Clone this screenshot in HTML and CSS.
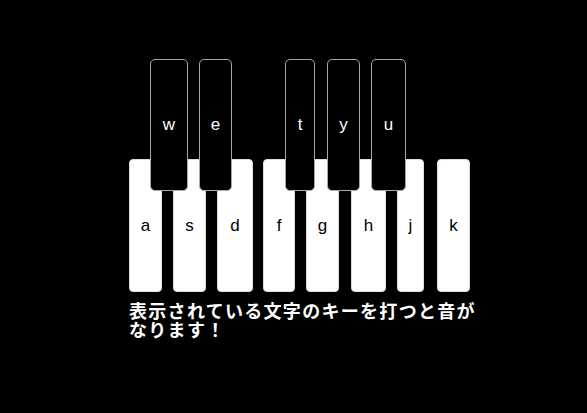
FILE: index.html
```html
<!DOCTYPE html>
<html lang="ja">
<head>
<meta charset="utf-8">
<link rel="stylesheet" href="styles.css">
</head>
<body>
<div class="piano">
  <div class="black-row">
    <div class="bkey k-w">w</div>
    <div class="bkey k-e">e</div>
    <div class="bkey k-t">t</div>
    <div class="bkey k-y">y</div>
    <div class="bkey k-u">u</div>
  </div>
  <div class="white-row">
    <div class="wkey k-a">a</div>
    <div class="wkey k-s">s</div>
    <div class="wkey k-d">d</div>
    <div class="wkey k-f">f</div>
    <div class="wkey k-g">g</div>
    <div class="wkey k-h">h</div>
    <div class="wkey k-j">j</div>
    <div class="wkey k-k">k</div>
  </div>
  <p class="message">表示されている文字のキーを打つと音がなります！</p>
</div>
</body>
</html>
```
FILE: styles.css
```css
html, body {
  margin: 0;
  background: #000;
}
body {
  width: 587px;
  height: 413px;
  overflow: hidden;
  font-family: "Liberation Sans", Arial, sans-serif;
}
.piano {
  padding: 59px 0 0 129px;
  width: 341px;
}
.black-row {
  position: relative;
  z-index: 2;
  display: flex;
  height: 132px;
}
.bkey {
  box-sizing: border-box;
  height: 132px;
  background: #000;
  border: 1px solid #a8a8a8;
  border-radius: 5px;
  color: #fff;
  font-size: 17px;
  display: flex;
  align-items: center;
  justify-content: center;
}
.k-w { width: 38px; margin-left: 21px; }
.k-e { width: 33px; margin-left: 11px; }
.k-t { width: 30px; margin-left: 53px; }
.k-y { width: 33px; margin-left: 12px; }
.k-u { width: 35px; margin-left: 11px; }
.white-row {
  position: relative;
  z-index: 1;
  display: flex;
  margin-top: -32px;
  height: 133px;
}
.wkey {
  box-sizing: border-box;
  height: 133px;
  background: #fff;
  border: 1px solid #ddd;
  border-radius: 4px;
  color: #000;
  font-size: 17px;
  display: flex;
  align-items: center;
  justify-content: center;
}
.k-a { width: 33px; }
.k-s { width: 33px; margin-left: 11px; }
.k-d { width: 36px; margin-left: 11px; }
.k-f { width: 32px; margin-left: 10px; }
.k-g { width: 33px; margin-left: 11px; }
.k-h { width: 35px; margin-left: 12px; }
.k-j { width: 27px; margin-left: 11px; }
.k-k { width: 33px; margin-left: 13px; }
.message {
  margin: 9px 0 0;
  width: 354px;
  color: #fff;
  font-family: "Noto Sans CJK JP", sans-serif;
  font-weight: bold;
  font-size: 18px;
  line-height: 19px;
  letter-spacing: 1.3px;
}
```
